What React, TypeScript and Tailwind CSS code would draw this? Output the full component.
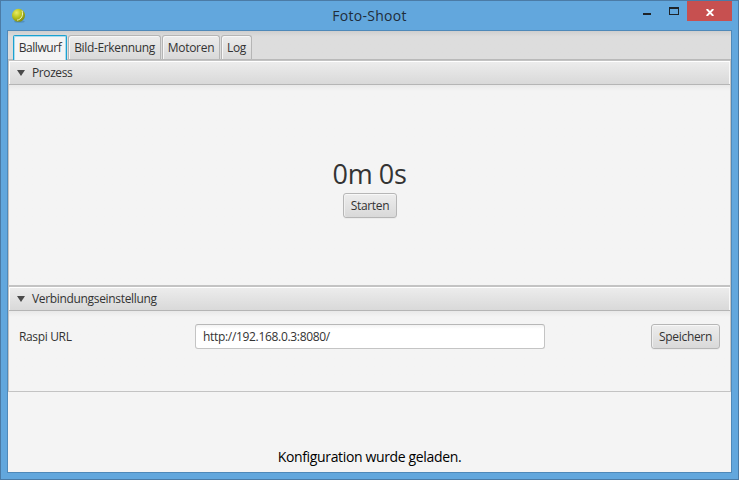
import type { ReactNode } from 'react';

function TennisBall() {
  return (
    <svg width="16" height="16" viewBox="0 0 16 16" className="shrink-0">
      <defs>
        <radialGradient id="ball" cx="0.35" cy="0.3" r="0.75">
          <stop offset="0" stopColor="#e9ec62" />
          <stop offset="0.5" stopColor="#b9c41e" />
          <stop offset="1" stopColor="#7c890e" />
        </radialGradient>
      </defs>
      <ellipse cx="9.4" cy="13.6" rx="5.4" ry="1.2" fill="#3f719c" opacity="0.45" />
      <circle cx="8.5" cy="7.3" r="6.5" fill="url(#ball)" />
      <path d="M12 2.6C13.6 7.4 11.4 11.4 7 12.2" fill="none" stroke="#eff2bd" strokeWidth="1" />
    </svg>
  );
}

function TitleBar() {
  return (
    <header className="grid h-[29px] grid-cols-[1fr_auto_1fr] items-start">
      <div className="pt-[7px] pl-[9px]">
        <TennisBall />
      </div>
      <h1 className="pt-[5px] text-[14px] leading-5 tracking-[0.3px] text-[#1f2d3a]">Foto-Shoot</h1>
      <div className="flex justify-end pr-[6px]">
        <svg width="44" height="20" viewBox="0 0 44 20" shapeRendering="crispEdges">
          <rect x="0" y="12" width="8" height="2" fill="#1e2328" />
          <path d="M26 6h10v8H26zM27 8v5h8V8z" fillRule="evenodd" fill="#1e2328" />
        </svg>
        <div className="flex h-5 w-[45px] items-center justify-center bg-[#c75050]">
          <svg width="8" height="7" viewBox="0 0 8 7" className="mt-[2px] ml-px">
            <path d="M0.7 0L7.3 7M7.3 0L0.7 7" stroke="#fff" strokeWidth="1.9" />
          </svg>
        </div>
      </div>
    </header>
  );
}

function Tab({ className, children }: { className: string; children: ReactNode }) {
  return (
    <div
      className={`flex h-6 items-center justify-center rounded-t-[3px] border border-b-0 border-[#b5b5b5] bg-linear-to-b from-[#ececec] to-[#d9d9d9] pt-px whitespace-nowrap shadow-[inset_1px_1px_0_#f7f7f7] ${className}`}
    >
      {children}
    </div>
  );
}

function TabBar() {
  return (
    <nav className="flex h-[29px] items-end gap-px border-b border-[#b9b9b9] bg-linear-to-b from-[#cfcfcf] to-[#dddddd] to-20% pl-[5px]">
      <div className="-mb-px flex h-[25px] w-[54px] items-center justify-center rounded-t-[2px] border border-b-0 border-[#1ba1d0] bg-[#f4f4f4] shadow-[inset_1px_1px_0_#a9dcee,inset_-1px_0_0_#a9dcee]">
        <span className="tracking-[-0.45px]">Ballwurf</span>
      </div>
      <Tab className="w-[93px]"><span className="tracking-[-0.35px]">Bild-Erkennung</span></Tab>
      <Tab className="w-[58px]"><span className="tracking-[-0.3px]">Motoren</span></Tab>
      <Tab className="w-[31px]"><span className="tracking-[-0.3px]">Log</span></Tab>
    </nav>
  );
}

function Pane({ title, className, children }: { title: ReactNode; className: string; children: ReactNode }) {
  return (
    <section className={`flex flex-col border border-[#c3c3c3] ${className}`}>
      <div className="flex h-6 shrink-0 items-center gap-[7px] border-b border-[#b5b5b5] bg-linear-to-b from-[#ededed] to-[#d9d9d9] pl-2 shadow-[inset_1px_1px_0_#fff,inset_-1px_0_0_#f8f8f8]">
        <svg width="8" height="6" viewBox="0 0 8 6">
          <path d="M0 0h8L4 6z" fill="#4a4a4a" />
        </svg>
        {title}
      </div>
      <div className="flex-1 bg-linear-to-b from-[#e9e9e9] to-[#f4f4f4] to-[6px]">{children}</div>
    </section>
  );
}

function Button({ className, children }: { className: string; children: ReactNode }) {
  return (
    <button
      className={`flex h-[25px] items-center justify-center rounded-[3px] border border-[#b6b6b6] bg-linear-to-b from-[#ededed] to-[#d9d9d9] shadow-[inset_0_1px_0_#f8f8f8,inset_1px_0_0_#f0f0f0,0_1px_0_#ececec] ${className}`}
    >
      {children}
    </button>
  );
}

export default function App() {
  return (
    <div className="flex h-[480px] w-[739px] flex-col border border-[#4b7ba6] bg-[#62a7dd] font-['Open_Sans','Noto_Sans',sans-serif] text-[12px] leading-4 text-[#333333]">
      <TitleBar />
      <main className="mx-[6px] flex h-[443px] flex-col border border-[#4f89b9] bg-[#f4f4f4]">
        <TabBar />
        <Pane className="h-[226px]" title={<span className="tracking-[-0.4px]">Prozess</span>}>
          <div className="flex h-full flex-col items-center pt-[70px]">
            <div className="text-[27px] leading-[38px] tracking-[-0.4px]">0m 0s</div>
            <Button className="w-[54px] pl-px"><span className="tracking-[-0.3px]">Starten</span></Button>
          </div>
        </Pane>
        <Pane className="h-[106px]" title={<span className="tracking-[-0.33px]">Verbindungseinstellung</span>}>
          <div className="grid grid-cols-[176px_350px_1fr] items-center pt-[13px] pr-[10px] pl-[10px]">
            <span className="tracking-[-0.35px]">Raspi URL</span>
            <input
              readOnly
              value="http://192.168.0.3:8080/"
              className="h-[25px] w-[350px] rounded-[3px] border border-[#c4c4c4] border-t-[#b7b7b7] bg-linear-to-b from-[#f3f3f3] to-white to-[4px] px-[7px] tracking-[-0.32px] outline-none"
            />
            <Button className="w-[69px] justify-self-end"><span className="tracking-[-0.3px]">Speichern</span></Button>
          </div>
        </Pane>
        <footer className="flex flex-1 items-end justify-center pb-[5px] text-[14px] leading-5 text-black">
          <span className="tracking-[-0.35px]">Konfiguration wurde geladen.</span>
        </footer>
      </main>
    </div>
  );
}
